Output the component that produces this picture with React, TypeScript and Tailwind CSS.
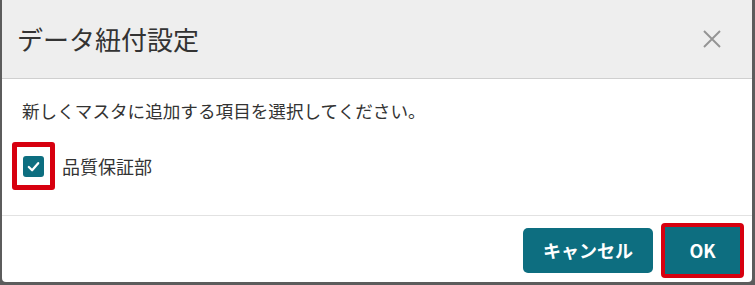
import React, { useState } from "react";

const font = { fontFamily: '"Noto Sans CJK JP", "Noto Sans", sans-serif' };

export default function App() {
  const [checked, setChecked] = useState(true);

  return (
    <div className="w-[755px] h-[285px] bg-[#5c5c5c] pl-[2px] pr-[3px] pb-[3px]" style={font}>
      <div className="flex h-full flex-col overflow-hidden rounded-b-[4px] bg-white">
        {/* ヘッダー */}
        <div className="flex h-[79px] shrink-0 items-center justify-between border-b border-[#cfcfcf] bg-[#eeeeee] pl-[15px] pr-[31px]">
          <h1 className="text-[26px] font-normal text-[#333] pb-[2px]">データ紐付設定</h1>
          <button type="button" className="flex h-[18px] w-[18px] items-center justify-center text-[#949494]">
            <svg width="18" height="18" viewBox="0 0 18 18" fill="none" stroke="currentColor" strokeWidth="1.9">
              <path d="M1 1 L17 17 M17 1 L1 17" />
            </svg>
          </button>
        </div>

        {/* 本文 */}
        <div className="flex h-[137px] shrink-0 flex-col border-b border-[#e2e2e2] pl-[20px]">
          <p className="mt-[19px] text-[17.6px] leading-[26px] text-[#333]">
            新しくマスタに追加する項目を選択してください。
          </p>
          <div className="mt-[18px] flex items-center">
            <div className="ml-[-10px] flex h-[48px] w-[43px] items-center justify-center rounded-[3px] border-[5px] border-[#d7000f]">
              <button
                type="button"
                onClick={() => setChecked((p) => !p)}
                className="flex h-[21px] w-[21px] items-center justify-center rounded-[3px] bg-[#0d6e80]"
              >
                {checked && (
                  <svg width="15" height="15" viewBox="0 0 16 16" fill="none" stroke="white" strokeWidth="2.4" strokeLinecap="round" strokeLinejoin="round">
                    <path d="M3 8.5 L6.5 12 L13 4.5" />
                  </svg>
                )}
              </button>
            </div>
            <span className="ml-[7px] text-[18px] text-[#333]">品質保証部</span>
          </div>
        </div>

        {/* フッター */}
        <div className="flex flex-1 items-center justify-end gap-[8px] pr-[8px] pt-[2px]">
          <button
            type="button"
            className="h-[45px] w-[130px] rounded-[5px] bg-[#0d6e80] text-[18px] font-bold text-white"
          >
            キャンセル
          </button>
          <div className="rounded-[4px] border-[4px] border-[#d7000f]">
            <button type="button" className="h-[47px] w-[75px] bg-[#0d6e80] text-[18px] font-bold text-white">
              OK
            </button>
          </div>
        </div>
      </div>
    </div>
  );
}
